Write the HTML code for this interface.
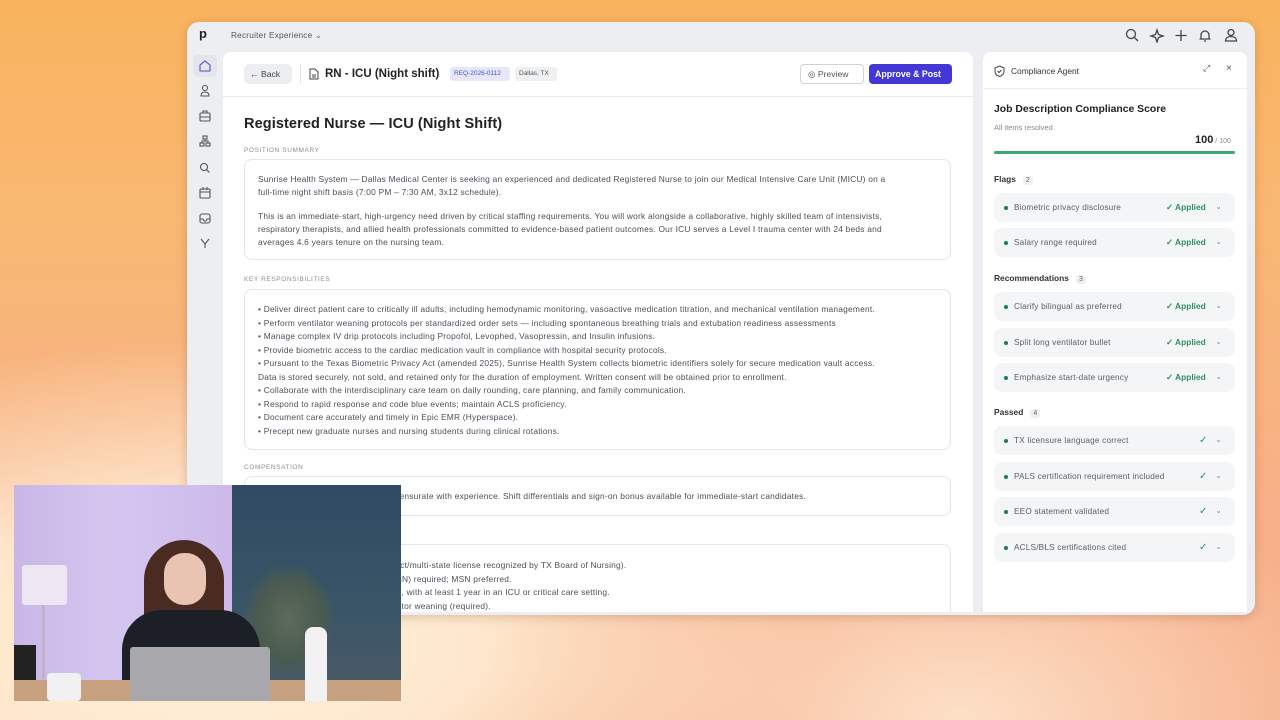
<!DOCTYPE html>
<html><head><meta charset="utf-8"><style>
*{box-sizing:border-box;margin:0;padding:0}
body{width:1280px;height:720px;overflow:hidden;position:relative;font-family:"Liberation Sans",sans-serif;
background:
radial-gradient(ellipse 600px 300px at 220px 640px,#fff3dd 0%,rgba(255,240,215,0.85) 45%,rgba(255,235,205,0) 100%),
radial-gradient(ellipse 420px 260px at 960px 720px,#fde0c8 0%,rgba(253,215,190,0) 100%),
linear-gradient(180deg,#f9b35e 0%,#f9b872 30%,#f7b088 70%,#f5ad88 100%);}
.a{position:absolute}
.win{left:187px;top:22px;width:1068px;height:593px;background:#eceef2;border-radius:12px;box-shadow:0 2px 10px rgba(120,60,20,.25)}
.t{color:#4a4d57;font-size:8.6px;white-space:nowrap;letter-spacing:.25px}
.main{left:223px;top:52px;width:750px;height:560px;background:#fff;border-radius:8px 8px 0 0;overflow:hidden}
.box{position:absolute;left:21px;width:707px;border:1px solid #e3e5ea;border-radius:8px;background:#fff}
.lbl{position:absolute;left:21px;font-size:6.5px;color:#8a8d96;letter-spacing:.6px}
.ln{position:absolute;left:13px;font-size:8.4px;color:#4c4f59;white-space:nowrap;letter-spacing:.22px}
.rp{left:983px;top:52px;width:264px;height:560px;background:#fff;border-radius:8px 8px 0 0}
.it{position:absolute;left:11px;width:241px;height:29px;background:#f4f5f7;border-radius:8px;line-height:29px}
.it .d{position:absolute;left:10px;top:13px;width:4px;height:4px;border-radius:50%;background:#1f7a58}
.it .x{position:absolute;left:20px;top:0;font-size:8.2px;color:#5a5d66;white-space:nowrap;letter-spacing:.2px}
.it .ap{position:absolute;left:172px;top:0;font-size:8.4px;color:#2f8f63;font-weight:bold}
.it .cv{position:absolute;right:13px;top:-1px;font-size:8px;color:#8a8d96}
.it .ck{position:absolute;left:205px;top:0;font-size:10px;color:#2f8f63}
.sh{position:absolute;left:11px;font-size:8.4px;font-weight:bold;color:#333}
.sh span{display:inline-block;margin-left:7px;background:#eef0f2;color:#666;font-weight:normal;font-size:7px;padding:1px 3px;border-radius:3px}
.hb{position:absolute;top:12px;height:20px;line-height:20px;white-space:nowrap}
</style></head><body>
<div class="a win"></div>
<div class="a" style="left:199px;top:26px;font-size:13px;font-weight:bold;color:#222">p</div>
<div class="a t" style="left:231px;top:30px;font-size:8.2px;color:#555">Recruiter Experience ⌄</div>
<svg class="a" style="left:1124px;top:27px" width="120" height="16" fill="none" stroke="#444" stroke-width="1.3">
<circle cx="7" cy="7" r="4.5"/><path d="M10.5 10.5l3.5 3.5"/>
<path d="M33 3l1.5 4.5L39 9l-4.5 1.5L33 15l-1.5-4.5L27 9l4.5-1.5z"/>
<path d="M57 3v11M51.5 8.5h11"/>
<path d="M77 12V8a4 4 0 018 0v4h1.5-11zM80 14h2"/>
<circle cx="107" cy="5.5" r="3"/><path d="M101.5 14c0-3 2.5-4.5 5.5-4.5s5.5 1.5 5.5 4.5z"/>
</svg>
<div class="a" style="left:193px;top:55px;width:24px;height:22px;background:#e3e5ea;border-radius:5px"></div>
<svg class="a" style="left:198px;top:59px" width="14" height="200" fill="none" stroke="#555" stroke-width="1.1">
<path d="M2 6l5-4 5 4v6H2z" stroke="#4b53d0"/>
<circle cx="7" cy="29" r="2.5"/><path d="M3 37c0-3 2-4 4-4s4 1 4 4z"/>
<rect x="2" y="54" width="10" height="8" rx="1"/><path d="M5 54v-2h4v2M2 58h10"/>
<rect x="5" y="77" width="4" height="3"/><rect x="2" y="84" width="4" height="3"/><rect x="8" y="84" width="4" height="3"/><path d="M7 80v2M4 84v-2h6v2"/>
<circle cx="6" cy="108" r="3.5"/><path d="M8.5 110.5l3 3"/>
<rect x="2" y="130" width="10" height="9" rx="1"/><path d="M2 133h10M5 128v3M9 128v3"/>
<rect x="2" y="155" width="10" height="9" rx="2"/><path d="M2 160h3l1 2h2l1-2h3"/>
<path d="M3 180l4 5 4-5M7 185v4"/>
</svg>
<div class="a main">
  <div class="hb" style="left:21px;width:48px;background:#eceef1;border-radius:5px;font-size:8.6px;color:#444;padding-left:6px">← Back</div>
  <div class="a" style="left:77px;top:12px;width:1px;height:20px;background:#e3e5ea"></div>
  <svg class="a" style="left:86px;top:16px" width="10" height="12" fill="none" stroke="#444" stroke-width="1"><path d="M1 1h5l3 3v7H1z"/><path d="M3 7h4M3 9h4"/></svg>
  <div class="hb" style="left:102px;font-size:11.5px;font-weight:bold;color:#222">RN - ICU (Night shift)</div>
  <div class="hb" style="left:227px;top:15px;height:14px;line-height:14px;width:60px;background:#e6e7fb;border-radius:3px;font-size:6.5px;color:#4b53c0;padding-left:4px">REQ-2026-0112</div>
  <div class="hb" style="left:292px;top:15px;height:14px;line-height:14px;width:42px;background:#eef0f2;border-radius:3px;font-size:6.5px;color:#555;padding-left:4px">Dallas, TX</div>
  <div class="hb" style="left:577px;width:64px;border:1px solid #cfd2d8;border-radius:4px;font-size:8.6px;color:#555;padding-left:7px;line-height:18px">◎ Preview</div>
  <div class="hb" style="left:646px;width:83px;background:#4338d4;border-radius:4px;font-size:8.8px;color:#fff;padding-left:6px;font-weight:bold">Approve &amp; Post</div>
  <div class="a" style="left:0;top:44px;width:750px;height:1px;background:#e8e9ed"></div>
  <div class="a" style="left:21px;top:64px;font-size:14.5px;font-weight:bold;color:#222;letter-spacing:.1px">Registered Nurse — ICU (Night Shift)</div>
  <div class="lbl" style="top:95px">POSITION SUMMARY</div>
  <div class="box" style="top:107px;height:101px">
    <div class="ln" style="top:14px">Sunrise Health System — Dallas Medical Center is seeking an experienced and dedicated Registered Nurse to join our Medical Intensive Care Unit (MICU) on a</div>
    <div class="ln" style="top:27px">full-time night shift basis (7:00 PM – 7:30 AM, 3x12 schedule).</div>
    <div class="ln" style="top:51px">This is an immediate-start, high-urgency need driven by critical staffing requirements. You will work alongside a collaborative, highly skilled team of intensivists,</div>
    <div class="ln" style="top:64px">respiratory therapists, and allied health professionals committed to evidence-based patient outcomes. Our ICU serves a Level I trauma center with 24 beds and</div>
    <div class="ln" style="top:77px">averages 4.6 years tenure on the nursing team.</div>
  </div>
  <div class="lbl" style="top:224px">KEY RESPONSIBILITIES</div>
  <div class="box" style="top:237px;height:161px">
    <div class="ln" style="top:14px">• Deliver direct patient care to critically ill adults, including hemodynamic monitoring, vasoactive medication titration, and mechanical ventilation management.</div>
    <div class="ln" style="top:27.5px">• Perform ventilator weaning protocols per standardized order sets — including spontaneous breathing trials and extubation readiness assessments</div>
    <div class="ln" style="top:41px">• Manage complex IV drip protocols including Propofol, Levophed, Vasopressin, and Insulin infusions.</div>
    <div class="ln" style="top:54.5px">• Provide biometric access to the cardiac medication vault in compliance with hospital security protocols.</div>
    <div class="ln" style="top:68px">• Pursuant to the Texas Biometric Privacy Act (amended 2025), Sunrise Health System collects biometric identifiers solely for secure medication vault access.</div>
    <div class="ln" style="top:81.5px">Data is stored securely, not sold, and retained only for the duration of employment. Written consent will be obtained prior to enrollment.</div>
    <div class="ln" style="top:95px">• Collaborate with the interdisciplinary care team on daily rounding, care planning, and family communication.</div>
    <div class="ln" style="top:108.5px">• Respond to rapid response and code blue events; maintain ACLS proficiency.</div>
    <div class="ln" style="top:122px">• Document care accurately and timely in Epic EMR (Hyperspace).</div>
    <div class="ln" style="top:135.5px">• Precept new graduate nurses and nursing students during clinical rotations.</div>
  </div>
  <div class="lbl" style="top:412px">COMPENSATION</div>
  <div class="box" style="top:424px;height:40px">
    <div class="ln" style="top:14px">$92,000 – $118,000 annually, commensurate with experience. Shift differentials and sign-on bonus available for immediate-start candidates.</div>
  </div>
  <div class="lbl" style="top:478px">QUALIFICATIONS</div>
  <div class="box" style="top:492px;height:80px">
    <div class="ln" style="top:15px">• Active Texas RN license (or compact/multi-state license recognized by TX Board of Nursing).</div>
    <div class="ln" style="top:28.5px">• Bachelor of Science in Nursing (BSN) required; MSN preferred.</div>
    <div class="ln" style="top:42px">• Minimum 2 years of RN experience, with at least 1 year in an ICU or critical care setting.</div>
    <div class="ln" style="top:55.5px">• Experience with mechanical ventilator weaning (required).</div>
  </div>
</div>
<div class="a rp">
  <svg class="a" style="left:11px;top:13px" width="11" height="12" fill="none" stroke="#444" stroke-width="1"><path d="M5.5 1L10 3v3.5c0 2.5-2 4.2-4.5 5C3 10.7 1 9 1 6.5V3z"/><path d="M3.5 6l1.5 1.5L7.5 5"/></svg>
  <div class="a" style="left:28px;top:14px;font-size:8.4px;color:#333">Compliance Agent</div>
  <div class="a" style="left:220px;top:11px;font-size:9px;color:#555">⤢</div>
  <div class="a" style="left:243px;top:11px;font-size:10px;color:#555">×</div>
  <div class="a" style="left:0;top:36px;width:264px;height:1px;background:#eceef1"></div>
  <div class="a" style="left:11px;top:52px;font-size:10.4px;font-weight:bold;color:#222">Job Description Compliance Score</div>
  <div class="a" style="left:11px;top:71px;font-size:7.5px;color:#888">All items resolved</div>
  <div class="a" style="left:212px;top:82px;font-size:11px;font-weight:bold;color:#222">100<span style="font-size:7px;font-weight:normal;color:#888"> / 100</span></div>
  <div class="a" style="left:11px;top:99px;width:241px;height:3px;background:#3aa776;border-radius:2px"></div>
  <div class="sh" style="top:122px">Flags<span>2</span></div>
  <div class="it" style="top:141px"><i class="d"></i><div class="x">Biometric privacy disclosure</div><div class="ap">✓ Applied</div><div class="cv">⌄</div></div>
  <div class="it" style="top:176px"><i class="d"></i><div class="x">Salary range required</div><div class="ap">✓ Applied</div><div class="cv">⌄</div></div>
  <div class="sh" style="top:221px">Recommendations<span>3</span></div>
  <div class="it" style="top:240px"><i class="d"></i><div class="x">Clarify bilingual as preferred</div><div class="ap">✓ Applied</div><div class="cv">⌄</div></div>
  <div class="it" style="top:276px"><i class="d"></i><div class="x">Split long ventilator bullet</div><div class="ap">✓ Applied</div><div class="cv">⌄</div></div>
  <div class="it" style="top:311px"><i class="d"></i><div class="x">Emphasize start-date urgency</div><div class="ap">✓ Applied</div><div class="cv">⌄</div></div>
  <div class="sh" style="top:355px">Passed<span>4</span></div>
  <div class="it" style="top:374px"><i class="d"></i><div class="x">TX licensure language correct</div><div class="ck">✓</div><div class="cv">⌄</div></div>
  <div class="it" style="top:410px"><i class="d"></i><div class="x">PALS certification requirement included</div><div class="ck">✓</div><div class="cv">⌄</div></div>
  <div class="it" style="top:445px"><i class="d"></i><div class="x">EEO statement validated</div><div class="ck">✓</div><div class="cv">⌄</div></div>
  <div class="it" style="top:481px"><i class="d"></i><div class="x">ACLS/BLS certifications cited</div><div class="ck">✓</div><div class="cv">⌄</div></div>
</div>
<div class="a" style="left:14px;top:485px;width:387px;height:216px;overflow:hidden;background:linear-gradient(90deg,#c9b6e6 0%,#d5c6f0 25%,#cbb8ea 60%,#b9a6dc 72%)">
  <div class="a" style="left:218px;top:0;width:169px;height:216px;background:linear-gradient(180deg,#2f4a62,#3b5568 60%,#4c5a64)"></div>
  <div class="a" style="left:8px;top:80px;width:45px;height:40px;background:#efe6f4;border-radius:3px"></div>
  <div class="a" style="left:28px;top:120px;width:3px;height:80px;background:#bfb3c8"></div>
  <div class="a" style="left:0;top:160px;width:22px;height:56px;background:#222"></div>
  <div class="a" style="left:230px;top:80px;width:90px;height:110px;background:radial-gradient(ellipse at center,#5d6a5c 0%,#4a5b4f 50%,rgba(70,85,75,0) 75%)"></div>
  <div class="a" style="left:130px;top:55px;width:80px;height:95px;border-radius:40px 40px 10px 10px;background:#4a2b22"></div>
  <div class="a" style="left:150px;top:68px;width:42px;height:52px;border-radius:20px;background:#e9c4b3"></div>
  <div class="a" style="left:108px;top:125px;width:138px;height:91px;border-radius:40px 40px 0 0;background:#1d1f27"></div>
  <div class="a" style="left:0;top:195px;width:387px;height:21px;background:#c7a07f"></div>
  <div class="a" style="left:116px;top:162px;width:140px;height:54px;background:#a8a7ab;border-radius:3px 3px 0 0"></div>
  <div class="a" style="left:291px;top:142px;width:22px;height:74px;background:#f2f2f4;border-radius:8px 8px 0 0"></div>
  <div class="a" style="left:33px;top:188px;width:34px;height:28px;background:#f0f0f2;border-radius:4px"></div>
</div>
</body></html>
